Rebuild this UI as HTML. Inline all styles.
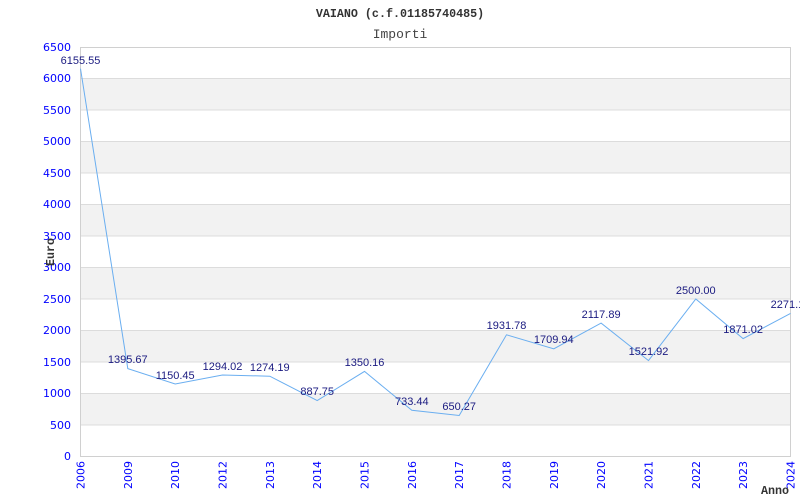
<!DOCTYPE html>
<html><head><meta charset="utf-8"><style>body{margin:0;background:#fff}svg{display:block}</style></head><body>
<svg width="800" height="500" xmlns="http://www.w3.org/2000/svg">
<g fill="#f2f2f2">
<rect x="80.5" y="78.5" width="710" height="31.5"/><rect x="80.5" y="141.5" width="710" height="31.5"/><rect x="80.5" y="204.5" width="710" height="31.5"/><rect x="80.5" y="267.5" width="710" height="31.5"/><rect x="80.5" y="330.5" width="710" height="31.5"/><rect x="80.5" y="393.5" width="710" height="31.5"/>
</g>
<g stroke="#dcdcdc" stroke-width="1">
<line x1="80" y1="78.5" x2="790" y2="78.5"/><line x1="80" y1="110" x2="790" y2="110"/><line x1="80" y1="141.5" x2="790" y2="141.5"/><line x1="80" y1="173" x2="790" y2="173"/><line x1="80" y1="204.5" x2="790" y2="204.5"/><line x1="80" y1="236" x2="790" y2="236"/><line x1="80" y1="267.5" x2="790" y2="267.5"/><line x1="80" y1="299" x2="790" y2="299"/><line x1="80" y1="330.5" x2="790" y2="330.5"/><line x1="80" y1="362" x2="790" y2="362"/><line x1="80" y1="393.5" x2="790" y2="393.5"/><line x1="80" y1="425" x2="790" y2="425"/>
</g>
<rect x="80.5" y="47.5" width="710" height="409" fill="none" stroke="#d0d0d0"/>
<text x="400" y="17" text-anchor="middle" font-family="Liberation Mono, monospace" font-weight="bold" font-size="11.7" fill="#333">VAIANO (c.f.01185740485)</text>
<text x="400" y="38" text-anchor="middle" font-family="Liberation Mono, monospace" font-size="13" fill="#444">Importi</text>
<g font-family="DejaVu Sans, sans-serif" font-size="11" fill="#0000ff" text-anchor="end">
<text x="71" y="51">6500</text><text x="71" y="82">6000</text><text x="71" y="114">5500</text><text x="71" y="145">5000</text><text x="71" y="177">4500</text><text x="71" y="208">4000</text><text x="71" y="240">3500</text><text x="71" y="271">3000</text><text x="71" y="303">2500</text><text x="71" y="334">2000</text><text x="71" y="366">1500</text><text x="71" y="397">1000</text><text x="71" y="429">500</text><text x="71" y="460">0</text>
</g>
<g font-family="DejaVu Sans, sans-serif" font-size="11" fill="#0000ff" text-anchor="end">
<text transform="translate(84.5,461) rotate(-90)">2006</text><text transform="translate(131.8,461) rotate(-90)">2009</text><text transform="translate(179.2,461) rotate(-90)">2010</text><text transform="translate(226.5,461) rotate(-90)">2012</text><text transform="translate(273.8,461) rotate(-90)">2013</text><text transform="translate(321.2,461) rotate(-90)">2014</text><text transform="translate(368.5,461) rotate(-90)">2015</text><text transform="translate(415.8,461) rotate(-90)">2016</text><text transform="translate(463.2,461) rotate(-90)">2017</text><text transform="translate(510.5,461) rotate(-90)">2018</text><text transform="translate(557.8,461) rotate(-90)">2019</text><text transform="translate(605.1,461) rotate(-90)">2020</text><text transform="translate(652.5,461) rotate(-90)">2021</text><text transform="translate(699.8,461) rotate(-90)">2022</text><text transform="translate(747.1,461) rotate(-90)">2023</text><text transform="translate(794.5,461) rotate(-90)">2024</text>
</g>
<text transform="translate(54,252) rotate(-90)" font-family="Liberation Mono, monospace" font-weight="bold" font-size="11.7" fill="#333" text-anchor="middle">Euro</text>
<text x="761" y="494" font-family="Liberation Mono, monospace" font-weight="bold" font-size="11.7" fill="#333">Anno</text>
<polyline fill="none" stroke="#6aaef0" stroke-width="1" points="80.5,68.7 127.8,368.6 175.2,384 222.5,375 269.8,376.2 317.2,400.6 364.5,371.4 411.8,410.3 459.2,415.5 506.5,334.8 553.8,348.8 601.1,323.1 648.5,360.6 695.8,299 743.1,338.6 790.5,313.4"/>
<g font-family="Liberation Sans, Arial, sans-serif" font-size="11" fill="#1a1a80" text-anchor="middle">
<text x="80.5" y="64">6155.55</text><text x="127.8" y="363">1395.67</text><text x="175.2" y="379">1150.45</text><text x="222.5" y="370">1294.02</text><text x="269.8" y="371">1274.19</text><text x="317.2" y="395">887.75</text><text x="364.5" y="366">1350.16</text><text x="411.8" y="405">733.44</text><text x="459.2" y="410">650.27</text><text x="506.5" y="329">1931.78</text><text x="553.8" y="343">1709.94</text><text x="601.1" y="318">2117.89</text><text x="648.5" y="355">1521.92</text><text x="695.8" y="294">2500.00</text><text x="743.1" y="333">1871.02</text><text x="790.5" y="308">2271.10</text>
</g>
</svg>
</body></html>
